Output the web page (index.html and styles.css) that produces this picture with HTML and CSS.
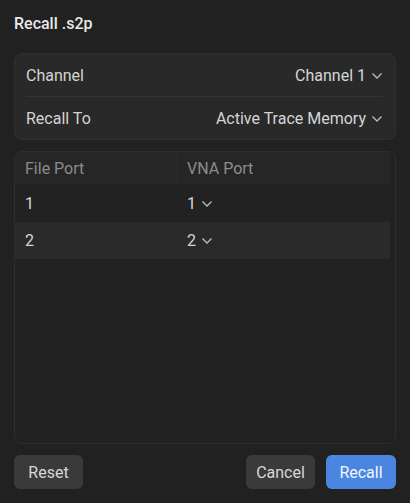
FILE: index.html
```html
<!DOCTYPE html>
<html>
<head>
<meta charset="utf-8">
<link rel="stylesheet" href="styles.css">
</head>
<body>
<div class="dialog">
  <div class="title">Recall .s2p</div>
  <div class="card">
    <div class="row">
      <span class="label">Channel</span>
      <span class="select">Channel 1<svg class="chev" viewBox="0 0 12 8" width="12" height="8"><path d="M1.5 1.5 L6 6 L10.5 1.5" fill="none" stroke="currentColor" stroke-width="1.3"/></svg></span>
    </div>
    <div class="divider"></div>
    <div class="row">
      <span class="label">Recall To</span>
      <span class="select">Active Trace Memory<svg class="chev" viewBox="0 0 12 8" width="12" height="8"><path d="M1.5 1.5 L6 6 L10.5 1.5" fill="none" stroke="currentColor" stroke-width="1.3"/></svg></span>
    </div>
  </div>
  <div class="table">
    <div class="thead">
      <div class="cell h first">File Port</div>
      <div class="cell h">VNA Port</div>
    </div>
    <div class="trow odd">
      <div class="cell first">1</div>
      <div class="cell"><span class="select">1<svg class="chev" viewBox="0 0 12 8" width="12" height="8"><path d="M1.5 1.5 L6 6 L10.5 1.5" fill="none" stroke="currentColor" stroke-width="1.3"/></svg></span></div>
    </div>
    <div class="trow even">
      <div class="cell first">2</div>
      <div class="cell"><span class="select">2<svg class="chev" viewBox="0 0 12 8" width="12" height="8"><path d="M1.5 1.5 L6 6 L10.5 1.5" fill="none" stroke="currentColor" stroke-width="1.3"/></svg></span></div>
    </div>
  </div>
  <div class="actions">
    <button class="btn">Reset</button>
    <div class="spacer"></div>
    <button class="btn">Cancel</button>
    <button class="btn primary">Recall</button>
  </div>
</div>
</body>
</html>
```
FILE: styles.css
```css
html, body {
  margin: 0;
  padding: 0;
  background: #212121;
  height: 100%;
}
body {
  font-family: Roboto, "Liberation Sans", sans-serif;
  color: #d6d6d6;
  font-size: 16px;
}
.dialog {
  box-sizing: border-box;
  height: 100vh;
  padding: 14px 14px 14px 14px;
  display: flex;
  flex-direction: column;
}
.title {
  font-size: 16px;
  font-weight: 500;
  color: #e8e8e8;
  line-height: 19px;
  height: 19px;
}
.card {
  margin-top: 20px;
  background: #292929;
  border: 1px solid #303030;
  border-radius: 8px;
  padding: 0 12px 0 11px;
}
.row {
  display: flex;
  justify-content: space-between;
  align-items: center;
  height: 42px;
}
.divider {
  height: 1px;
  background: #353535;
}
.label {
  color: #d4d4d4;
}
.select {
  display: inline-flex;
  align-items: center;
  color: #d6d6d6;
}
.chev {
  margin-left: 5px;
  color: #bdbdbd;
  margin-top: 1px;
}
.table {
  margin-top: 11px;
  flex: 1;
  border: 1px solid #2e2e2e;
  border-radius: 8px;
  padding-right: 5px;
  background: #212121;
  overflow: hidden;
}
.thead, .trow {
  display: grid;
  grid-template-columns: 162px 1fr;
}
.thead {
  height: 32px;
  background: #262626;
  border-top-left-radius: 7px;
}
.thead .cell.first {
  border-right: 1px solid #2a2a2a;
}
.trow {
  height: 38px;
}
.trow.odd {
  background: #222222;
}
.trow.even {
  background: #2a2a2a;
  height: 37px;
}
.cell {
  display: flex;
  align-items: center;
  padding-left: 10px;
}
.cell.h {
  color: #8c8c8c;
}
.actions {
  margin-top: 11px;
  display: flex;
  align-items: center;
  gap: 11px;
}
.spacer {
  flex: 1;
}
.btn {
  font-family: Roboto, "Liberation Sans", sans-serif;
  font-size: 16px;
  height: 34px;
  width: 69px;
  border: none;
  border-radius: 6px;
  background: #3a3a3a;
  color: #d8d8d8;
  padding: 0;
}
.btn.primary {
  background: #4a86e0;
  color: #f2f6fc;
  width: 70px;
}
```
